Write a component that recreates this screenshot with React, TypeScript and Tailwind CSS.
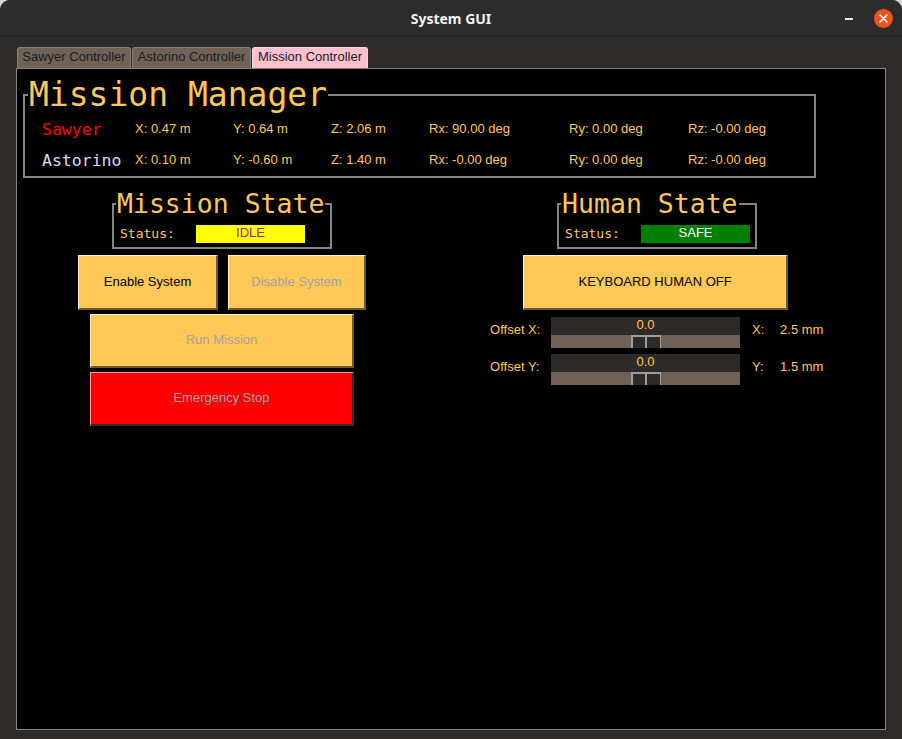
import React from 'react';

const mono = "font-['DejaVu_Sans_Mono',monospace]";

type FrameProps = {
  title: string;
  width: string;
  children: React.ReactNode;
};

// Tk-style labelframe: fieldset + legend breaks the top border around the title
function StateFrame({ title, width, children }: FrameProps) {
  return (
    <fieldset className={`${width} border-2 border-[#858585]`}>
      <legend className={`${mono} ml-[2px] px-[1px] text-[26.5px] leading-[28px] text-[#ffc857]`}>{title}</legend>
      <div className="flex items-center pl-[6px] pt-[6px] pb-[3px]">{children}</div>
    </fieldset>
  );
}

type OffsetRowProps = {
  label: string;
  axis: string;
  value: string;
};

function OffsetRow({ label, axis, value }: OffsetRowProps) {
  return (
    <div className="flex items-start h-[31px] ml-[64px] text-[13px] text-[#ffc857]">
      <span className="w-[61px] mt-[5px] leading-[16px]">{label}</span>
      <div className="w-[189px] h-[31px] flex flex-col">
        <div className="h-[18px] bg-[#2e2a27] text-center leading-[16px]">0.0</div>
        <div className="flex-1 bg-[#706157] flex justify-center">
          <div className="w-[30px] h-full flex gap-[2px] bg-[#9d9d9d] pt-[2px] pl-[2px] pr-[1px]">
            <div className="flex-1 bg-[#2e2a27]" />
            <div className="flex-1 bg-[#2e2a27]" />
          </div>
        </div>
      </div>
      <span className="ml-[12px] w-[28px] mt-[5px] leading-[16px]">{axis}</span>
      <span className="mt-[5px] leading-[16px]">{value}</span>
    </div>
  );
}

const poses = [
  {
    name: 'Sawyer',
    nameClass: 'text-[#ff0000]',
    values: ['X: 0.47 m', 'Y: 0.64 m', 'Z: 2.06 m', 'Rx: 90.00 deg', 'Ry: 0.00 deg', 'Rz: -0.00 deg'],
  },
  {
    name: 'Astorino',
    nameClass: 'text-[#ddd6fa]',
    values: ['X: 0.10 m', 'Y: -0.60 m', 'Z: 1.40 m', 'Rx: -0.00 deg', 'Ry: 0.00 deg', 'Rz: -0.00 deg'],
  },
];

export default function App() {
  return (
    <div className="w-[902px] h-[739px] bg-[#d6d6d6] overflow-hidden font-['Liberation_Sans',Arial,sans-serif]">
      <div className="w-full h-full rounded-t-[10px] overflow-hidden bg-[#2e2b28] flex flex-col">
        {/* Title bar */}
        <div className="h-[37px] shrink-0 bg-[#2c2c2c] border-b border-[#232323] grid grid-cols-[1fr_auto_1fr] items-center">
          <div />
          <span className="font-['Noto_Sans',sans-serif] font-bold text-[14px] text-[#f2f2f2]">System GUI</span>
          <div className="flex items-center justify-end pr-[9px]">
            <div className="w-[8px] h-[2px] bg-[#e8e8e8] mt-[2px]" />
            <div className="ml-[21px] w-[19px] h-[19px] rounded-full bg-[#e95420] flex items-center justify-center">
              <svg width="9" height="9" viewBox="0 0 9 9">
                <path d="M1 1 L8 8 M8 1 L1 8" stroke="#ffffff" strokeWidth="1.6" strokeLinecap="round" />
              </svg>
            </div>
          </div>
        </div>

        {/* Tabs */}
        <div className="flex gap-[1px] mt-[10px] ml-[17px] h-[21px] text-[13px] leading-[16px] text-[#1b1b1b]">
          <div className="w-[114px] flex items-start pt-[1px] justify-center bg-[#716257] border border-b-0 border-[#8d8177] rounded-t-[3px]">Sawyer Controller</div>
          <div className="w-[119px] flex items-start pt-[1px] justify-center bg-[#716257] border border-b-0 border-[#8d8177] rounded-t-[3px]">Astorino Controller</div>
          <div className="w-[116px] flex items-start pt-[1px] justify-center bg-[#ffc0cb] border border-b-0 border-[#ffd3da] rounded-t-[3px] text-[#1a1a2e]">Mission Controller</div>
        </div>

        {/* Panel */}
        <div className="mx-[16px] h-[662px] bg-black border border-[#858585] flex flex-col">
          <fieldset className="w-[793px] ml-[6px] mt-[10px] border-2 border-[#858585]">
            <legend className={`${mono} ml-[3px] px-[1px] text-[33px] leading-[32px] text-[#ffc857]`}>Mission Manager</legend>
            <div className="flex flex-col gap-[11px] pl-[17px] pt-[8px] pb-[6px]">
              {poses.map((p) => (
                <div key={p.name} className="grid grid-cols-[93px_98px_98px_98px_140px_119px_1fr] items-center h-[20px]">
                  <span className={`${mono} text-[16.5px] leading-[20px] translate-y-[1px] ${p.nameClass}`}>{p.name}</span>
                  {p.values.map((v) => (
                    <span key={v} className="text-[13px] leading-[16px] text-[#ffc857]">{v}</span>
                  ))}
                </div>
              ))}
            </div>
          </fieldset>

          <div className="flex mt-[12px]">
            {/* Mission state column */}
            <div className="w-[410px] flex flex-col items-start">
              <div className="ml-[95px]">
                <StateFrame title="Mission State" width="w-[220px]">
                  <span className={`${mono} text-[13px] text-[#ffc857] w-[76px]`}>Status:</span>
                  <div className="w-[109px] h-[18px] bg-[#ffff00] text-center text-[13px] leading-[16px] text-[#a02090]">IDLE</div>
                </StateFrame>
              </div>
              <div className="flex gap-[10px] ml-[61px] mt-[6px] text-[13px]">
                <div className="w-[140px] h-[55px] flex items-center justify-center bg-[#ffc857] border-t border-l border-b-2 border-r-2 border-t-[#fff0c8] border-l-[#fff0c8] border-b-[#6b5a2e] border-r-[#6b5a2e] text-black">Enable System</div>
                <div className="w-[138px] h-[55px] flex items-center justify-center bg-[#ffc857] border-t border-l border-b-2 border-r-2 border-t-[#fff0c8] border-l-[#fff0c8] border-b-[#6b5a2e] border-r-[#6b5a2e] text-[#a3a3a3]">Disable System</div>
              </div>
              <div className="w-[264px] h-[54px] ml-[73px] mt-[4px] flex items-center justify-center bg-[#ffc857] border-t border-l border-b-2 border-r-2 border-t-[#fff0c8] border-l-[#fff0c8] border-b-[#6b5a2e] border-r-[#6b5a2e] text-[13px] text-[#a3a3a3]">Run Mission</div>
              <div className="w-[264px] h-[54px] ml-[73px] mt-[4px] flex items-center justify-center bg-[#ff0000] border-t border-l border-b-2 border-r-2 border-t-[#ff9a9a] border-l-[#ff9a9a] border-b-[#3a2a2a] border-r-[#3a2a2a] text-[13px] text-[#a3a3a3]">Emergency Stop</div>
            </div>

            {/* Human state column */}
            <div className="w-[460px] flex flex-col items-start">
              <div className="ml-[131px]">
                <StateFrame title="Human State" width="w-[200px]">
                  <span className={`${mono} text-[13px] text-[#ffc857] w-[76px]`}>Status:</span>
                  <div className="w-[109px] h-[18px] bg-[#008000] text-center text-[13px] leading-[16px] text-white">SAFE</div>
                </StateFrame>
              </div>
              <div className="w-[265px] h-[55px] ml-[97px] mt-[6px] flex items-center justify-center bg-[#ffc857] border-t border-l border-b-2 border-r-2 border-t-[#fff0c8] border-l-[#fff0c8] border-b-[#6b5a2e] border-r-[#6b5a2e] text-[13px] text-black">KEYBOARD HUMAN OFF</div>
              <div className="flex flex-col gap-[6px] mt-[7px]">
                <OffsetRow label="Offset X:" axis="X:" value="2.5 mm" />
                <OffsetRow label="Offset Y:" axis="Y:" value="1.5 mm" />
              </div>
            </div>
          </div>
        </div>
      </div>
    </div>
  );
}
